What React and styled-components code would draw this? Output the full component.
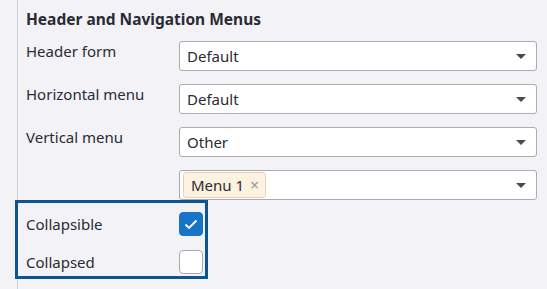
import React from 'react';
import styled, { createGlobalStyle } from 'styled-components';

const GlobalStyle = createGlobalStyle`
  html, body {
    margin: 0;
    padding: 0;
    background: #f2f2f7;
  }
  body {
    font-family: "Noto Sans", "Open Sans", sans-serif;
    color: #2b2b33;
  }
`;

const Panel = styled.div`
  margin-left: 17px;
  border-left: 1px solid #cfcfd4;
  padding: 6px 10px 9px 8px;
  min-height: 274px;
`;

const Title = styled.h3`
  margin: 0 0 9px 0;
  font-size: 15.5px;
  font-weight: 700;
  line-height: 26px;
  color: #2b2b33;
`;

const Row = styled.div`
  display: grid;
  grid-template-columns: 153px 1fr;
  align-items: start;
  margin-bottom: ${p => (p.$last ? '0' : '13px')};
`;

const Label = styled.label`
  font-size: 15px;
  line-height: 20px;
  color: #2b2b33;
`;

const SelectBox = styled.div`
  display: flex;
  align-items: center;
  height: 30px;
  box-sizing: border-box;
  background: #fff;
  border: 1px solid #ababb0;
  border-radius: 3px;
  padding: 0 8px 0 7px;
  font-size: 15px;
  color: #2b2b33;
`;

const Value = styled.span`
  flex: 1;
  display: flex;
  align-items: center;
`;

const Caret = styled.span`
  width: 0;
  height: 0;
  border-left: 5px solid transparent;
  border-right: 5px solid transparent;
  border-top: 5px solid #4a4a4f;
  margin-right: 2px;
`;

const Chip = styled.span`
  display: inline-flex;
  align-items: center;
  gap: 6px;
  height: 26px;
  box-sizing: border-box;
  margin-left: -4px;
  padding: 0 6px 0 7px;
  background: #fdf2df;
  border: 1px solid #e6d6b7;
  border-radius: 3px;
  font-size: 15px;
`;

const ChipClose = styled.span`
  color: #9a9a9f;
  font-size: 16px;
  line-height: 1;
`;

const Highlight = styled.div`
  margin-left: -11px;
  width: 193px;
  box-sizing: border-box;
  border: 3px solid #0b5591;
  padding: 9px 2px 2px 8px;
  display: flex;
  flex-direction: column;
  gap: 14px;
`;

const CheckRow = styled.div`
  display: grid;
  grid-template-columns: 153px 24px;
  align-items: center;
`;

const Check = styled.span`
  display: flex;
  align-items: center;
  justify-content: center;
  width: 24px;
  height: 24px;
  box-sizing: border-box;
  border-radius: 4px;
  background: ${p => (p.$on ? '#1874c6' : '#fff')};
  border: 1px solid ${p => (p.$on ? '#1874c6' : '#a9a9ae')};
`;

const Select = ({ children }) => (
  <SelectBox>
    <Value>{children}</Value>
    <Caret />
  </SelectBox>
);

export default function App() {
  return (
    <>
      <GlobalStyle />
      <Panel>
        <Title>Header and Navigation Menus</Title>
        <Row>
          <Label>Header form</Label>
          <Select>Default</Select>
        </Row>
        <Row>
          <Label>Horizontal menu</Label>
          <Select>Default</Select>
        </Row>
        <Row>
          <Label>Vertical menu</Label>
          <Select>Other</Select>
        </Row>
        <Row $last>
          <span />
          <Select>
            <Chip>
              Menu 1 <ChipClose>×</ChipClose>
            </Chip>
          </Select>
        </Row>
        <Highlight>
          <CheckRow>
            <Label>Collapsible</Label>
            <Check $on>
              <svg width="14" height="11" viewBox="0 0 14 11" fill="none">
                <path d="M1.5 5.5 L5 9 L12.5 1.5" stroke="#fff" strokeWidth="1.8" />
              </svg>
            </Check>
          </CheckRow>
          <CheckRow>
            <Label>Collapsed</Label>
            <Check />
          </CheckRow>
        </Highlight>
      </Panel>
    </>
  );
}
